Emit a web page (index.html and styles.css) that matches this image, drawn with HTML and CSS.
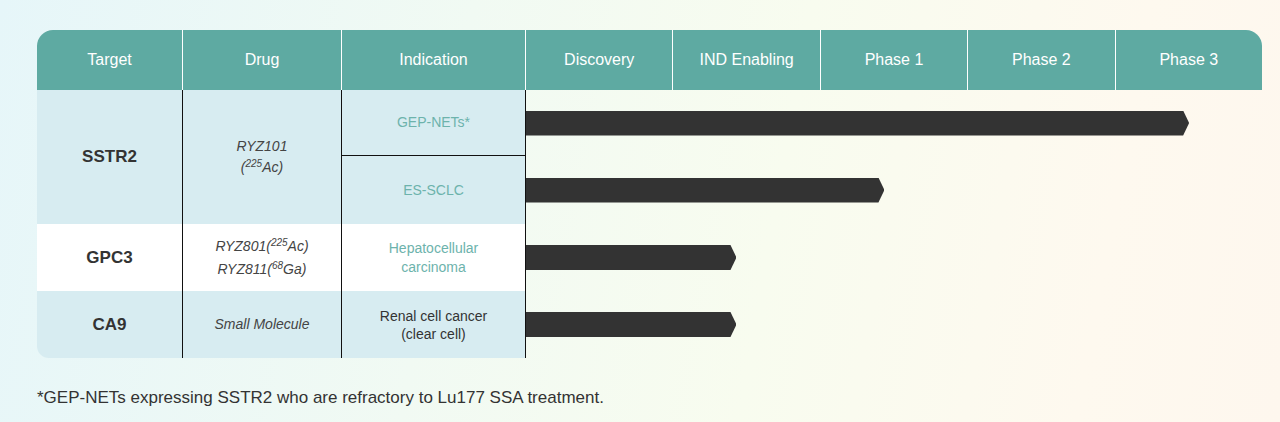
FILE: index.html
```html
<!DOCTYPE html>
<html lang="en">
<head>
<meta charset="utf-8">
<title>Pipeline</title>
<link rel="stylesheet" href="styles.css">
</head>
<body>
<div class="page">
  <div class="pipeline">
    <div class="head">
      <div class="hc">Target</div>
      <div class="hc">Drug</div>
      <div class="hc">Indication</div>
      <div class="hc">Discovery</div>
      <div class="hc">IND Enabling</div>
      <div class="hc">Phase 1</div>
      <div class="hc">Phase 2</div>
      <div class="hc">Phase 3</div>
    </div>
    <div class="grid">
      <div class="cell target blue span2">SSTR2</div>
      <div class="cell drug blue span2"><span>RYZ101<br>(<sup>225</sup>Ac)</span></div>
      <div class="cell ind blue split">GEP-NETs*</div>
      <div class="track"><div class="bar" style="width:90.1%"></div></div>
      <div class="cell ind blue">ES-SCLC</div>
      <div class="track"><div class="bar" style="width:48.7%"></div></div>

      <div class="cell target white">GPC3</div>
      <div class="cell drug white tall"><span>RYZ801(<sup>225</sup>Ac)<br>RYZ811(<sup>68</sup>Ga)</span></div>
      <div class="cell ind white">Hepatocellular<br>carcinoma</div>
      <div class="track"><div class="bar" style="width:28.6%"></div></div>

      <div class="cell target blue last">CA9</div>
      <div class="cell drug blue"><span>Small Molecule</span></div>
      <div class="cell ind blue dark">Renal cell cancer<br>(clear cell)</div>
      <div class="track"><div class="bar" style="width:28.6%"></div></div>
    </div>
  </div>
  <p class="note">*GEP-NETs expressing SSTR2 who are refractory to Lu177 SSA treatment.</p>
</div>
</body>
</html>
```

FILE: styles.css
```css
html, body {
  margin: 0;
  padding: 0;
}
body {
  min-height: 100vh;
  background: linear-gradient(100deg, #e6f6f9 0%, #f1faf3 35%, #f8fcef 60%, #fef9ef 85%, #fef7ee 100%);
  font-family: "Liberation Sans", Arial, sans-serif;
  color: #333;
}
.page {
  padding: 30px 0 0 37px;
}
.pipeline {
  width: 1225px;
}
.head {
  display: grid;
  grid-template-columns: 145px 158px 183px repeat(5, 1fr);
  column-gap: 1px;
  background: #ffffff;
  border-radius: 16px 16px 0 0;
  overflow: hidden;
  height: 60px;
}
.hc {
  background: #5eaaa2;
  color: #ffffff;
  font-size: 16px;
  display: flex;
  align-items: center;
  justify-content: center;
}
.grid {
  display: grid;
  grid-template-columns: 145px 159px 185px 1fr;
  grid-template-rows: 66px 68px 67px 67px;
}
.cell {
  display: flex;
  align-items: center;
  justify-content: center;
  text-align: center;
  box-sizing: border-box;
}
.blue { background: #d7ecf1; }
.white { background: #ffffff; }
.span2 { grid-row: span 2; }
.target {
  font-weight: bold;
  font-size: 17px;
  color: #333;
}
.target.last {
  border-bottom-left-radius: 12px;
}
.drug {
  border-left: 1px solid #111;
  font-style: italic;
  font-size: 14px;
  line-height: 21px;
  color: #444;
}
.drug.tall { line-height: 23px; }
.drug sup {
  font-size: 10px;
  line-height: 0;
  vertical-align: 5px;
}
.ind {
  border-left: 1px solid #111;
  border-right: 1px solid #111;
  font-size: 14px;
  line-height: 19px;
  color: #6db3ac;
}
.ind.split {
  border-bottom: 1px solid #111;
}
.ind.dark {
  color: #333;
  line-height: 18px;
}
.track {
  display: flex;
  align-items: center;
}
.bar {
  height: 25px;
  background: #333333;
  clip-path: polygon(0 0, calc(100% - 6px) 0, 100% 50%, calc(100% - 6px) 100%, 0 100%);
}
.note {
  margin: 30px 0 0 0;
  font-size: 17px;
  line-height: 20px;
  color: #333;
}
```
